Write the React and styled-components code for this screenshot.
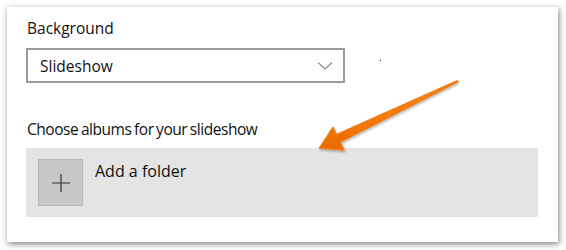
import React from 'react';
import styled, { createGlobalStyle } from 'styled-components';

const GlobalStyle = createGlobalStyle`
  html, body {
    margin: 0;
    padding: 0;
    background: #ffffff;
  }
  body {
    font-family: "Open Sans", "Noto Sans", "Liberation Sans", sans-serif;
    color: #111;
  }
`;

const Page = styled.div`
  position: relative;
  width: 566px;
  height: 250px;
  padding: 7px 8px 8px 7px;
  box-sizing: border-box;
`;

const Card = styled.div`
  width: 551px;
  height: 235px;
  box-sizing: border-box;
  background: #fff;
  box-shadow: 1px 2px 6px rgba(0, 0, 0, 0.5);
  padding: 11px 20px 0 19px;
  display: flex;
  flex-direction: column;
`;

const Label = styled.div`
  font-size: 15.5px;
  line-height: 20px;
  margin-left: 1px;
  margin-top: ${(p) => p.$top || 0}px;
  letter-spacing: ${(p) => (p.$tight ? '-0.45px' : '0')};
  word-spacing: ${(p) => (p.$tight ? '-1px' : '0')};
`;

const Select = styled.div`
  width: 319px;
  height: 35px;
  box-sizing: border-box;
  margin-top: 10px;
  border: 2px solid #9a9a9a;
  display: flex;
  align-items: center;
  justify-content: space-between;
  padding: 0 10px 0 12px;
  font-size: 15.5px;
  line-height: 20px;
`;

const Chevron = styled.svg`
  width: 16px;
  height: 10px;
  margin-top: 1px;
`;

const FolderPanel = styled.div`
  width: 512px;
  height: 69px;
  margin-top: 9px;
  background: #e4e4e4;
  display: flex;
  align-items: flex-start;
  padding: 11px 12px;
  box-sizing: border-box;
  gap: 12px;
`;

const PlusTile = styled.div`
  width: 45px;
  height: 47px;
  box-sizing: border-box;
  background: #c7c7c7;
  border: 1px solid #b8b8b8;
  display: flex;
  align-items: center;
  justify-content: center;
`;

const FolderText = styled.div`
  font-size: 16px;
  line-height: 20px;
  margin-top: 2px;
`;

const Dot = styled.span`
  position: absolute;
  left: 380px;
  top: 60px;
  width: 1px;
  height: 1px;
  background: #222;
`;

const Arrow = styled.svg`
  position: absolute;
  left: 0;
  top: 0;
  width: 566px;
  height: 250px;
  pointer-events: none;
`;

export default function App() {
  return (
    <>
      <GlobalStyle />
      <Page>
        <Card>
          <Label>Background</Label>
          <Select>
            <span>Slideshow</span>
            <Chevron viewBox="0 0 16 10">
              <path d="M1 1.5 L8 8 L15 1.5" fill="none" stroke="#888" strokeWidth="1.1" />
            </Chevron>
          </Select>
          <Label $top={36} $tight>Choose albums for your slideshow</Label>
          <FolderPanel>
            <PlusTile>
              <svg width="20" height="20" viewBox="0 0 20 20">
                <path d="M10 1 V19 M1 10 H19" stroke="#333" strokeWidth="1.2" fill="none" />
              </svg>
            </PlusTile>
            <FolderText>Add a folder</FolderText>
          </FolderPanel>
        </Card>
        <Dot />
        <Arrow viewBox="0 0 566 250">
          <defs>
            <linearGradient id="og" x1="0" y1="0" x2="0" y2="1">
              <stop offset="0" stopColor="#ff8c1a" />
              <stop offset="1" stopColor="#e86a00" />
            </linearGradient>
            <filter id="sh" x="-20%" y="-20%" width="140%" height="140%">
              <feDropShadow dx="1" dy="1.5" stdDeviation="1.2" floodColor="#000" floodOpacity="0.3" />
            </filter>
          </defs>
          <polygon
            points="458,81.5 340,142.2 344,150 319.5,148 333,127.5 336.4,134.6 457,81"
            fill="url(#og)"
            stroke="#f07a10"
            strokeWidth="1.5"
            strokeLinejoin="round"
            filter="url(#sh)"
          />
        </Arrow>
      </Page>
    </>
  );
}
